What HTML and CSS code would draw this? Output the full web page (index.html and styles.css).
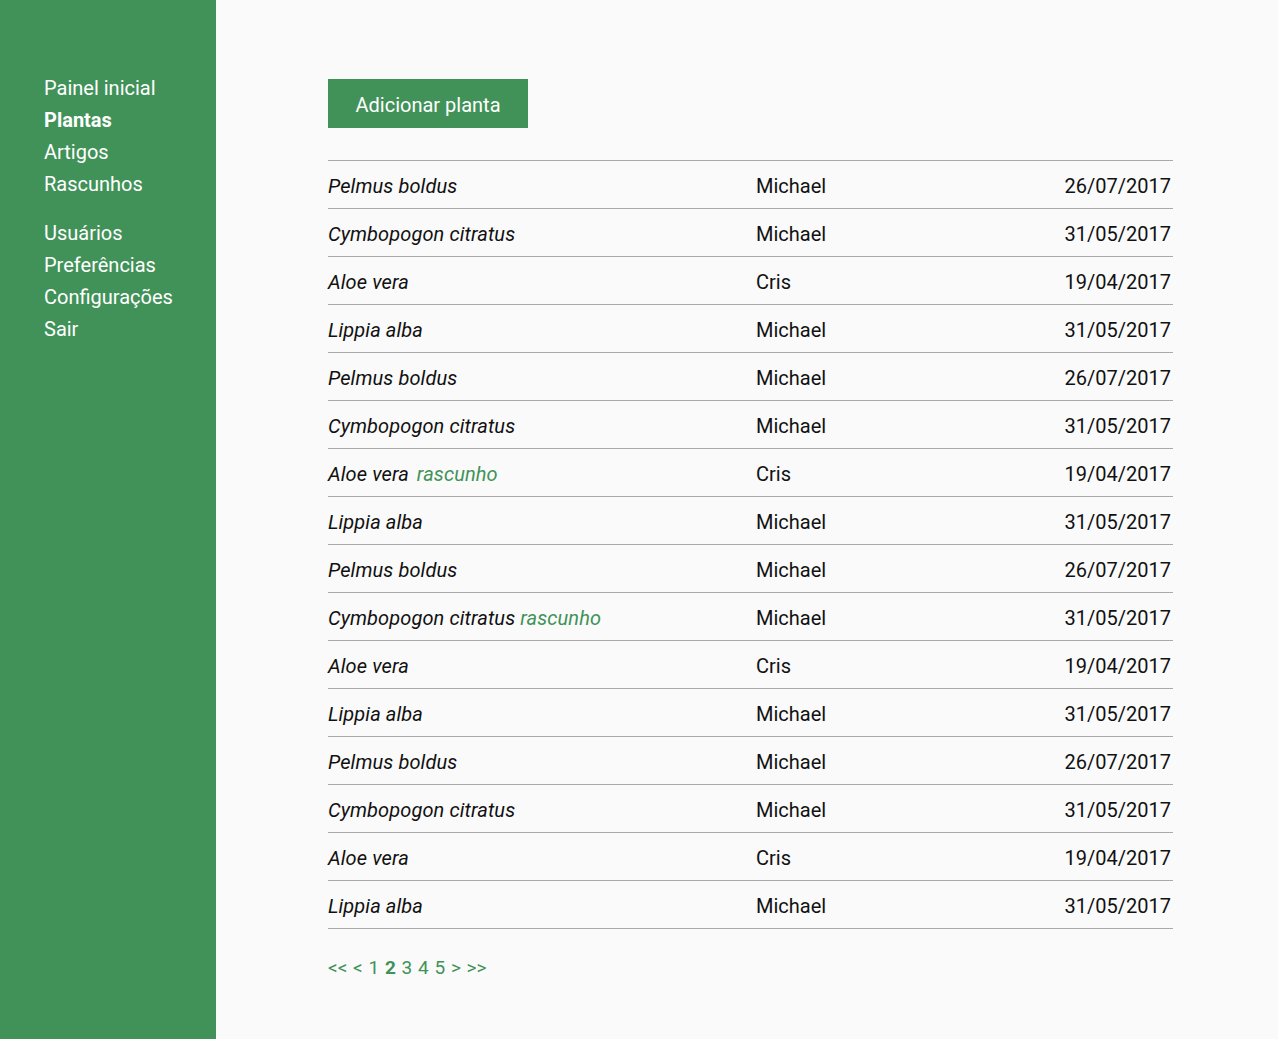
FILE: index.html
```html
<!DOCTYPE html>
<html lang="pt">
<head>
<meta charset="utf-8">
<title>Plantas</title>
<link rel="stylesheet" href="styles.css">
</head>
<body>
<div class="layout">
  <nav class="sidebar">
    <ul class="menu">
      <li>Painel inicial</li>
      <li class="active">Plantas</li>
      <li>Artigos</li>
      <li>Rascunhos</li>
    </ul>
    <ul class="menu">
      <li>Usuários</li>
      <li>Preferências</li>
      <li>Configurações</li>
      <li>Sair</li>
    </ul>
  </nav>
  <main class="content">
    <button class="add-btn">Adicionar planta</button>
    <div class="plants">
      <div class="row"><span class="name">Pelmus boldus</span><span class="author">Michael</span><span class="date">26/07/2017</span></div>
      <div class="row"><span class="name">Cymbopogon citratus</span><span class="author">Michael</span><span class="date">31/05/2017</span></div>
      <div class="row"><span class="name">Aloe vera</span><span class="author">Cris</span><span class="date">19/04/2017</span></div>
      <div class="row"><span class="name">Lippia alba</span><span class="author">Michael</span><span class="date">31/05/2017</span></div>
      <div class="row"><span class="name">Pelmus boldus</span><span class="author">Michael</span><span class="date">26/07/2017</span></div>
      <div class="row"><span class="name">Cymbopogon citratus</span><span class="author">Michael</span><span class="date">31/05/2017</span></div>
      <div class="row"><span class="name">Aloe vera <span class="draft wide">rascunho</span></span><span class="author">Cris</span><span class="date">19/04/2017</span></div>
      <div class="row"><span class="name">Lippia alba</span><span class="author">Michael</span><span class="date">31/05/2017</span></div>
      <div class="row"><span class="name">Pelmus boldus</span><span class="author">Michael</span><span class="date">26/07/2017</span></div>
      <div class="row"><span class="name">Cymbopogon citratus <span class="draft">rascunho</span></span><span class="author">Michael</span><span class="date">31/05/2017</span></div>
      <div class="row"><span class="name">Aloe vera</span><span class="author">Cris</span><span class="date">19/04/2017</span></div>
      <div class="row"><span class="name">Lippia alba</span><span class="author">Michael</span><span class="date">31/05/2017</span></div>
      <div class="row"><span class="name">Pelmus boldus</span><span class="author">Michael</span><span class="date">26/07/2017</span></div>
      <div class="row"><span class="name">Cymbopogon citratus</span><span class="author">Michael</span><span class="date">31/05/2017</span></div>
      <div class="row"><span class="name">Aloe vera</span><span class="author">Cris</span><span class="date">19/04/2017</span></div>
      <div class="row"><span class="name">Lippia alba</span><span class="author">Michael</span><span class="date">31/05/2017</span></div>
    </div>
    <div class="pager">
      <span>&lt;&lt;</span><span>&lt;</span><span>1</span><span class="current">2</span><span>3</span><span>4</span><span>5</span><span>&gt;</span><span>&gt;&gt;</span>
    </div>
  </main>
</div>
</body>
</html>
```
FILE: styles.css
```css
html, body {
  margin: 0;
  padding: 0;
  height: 100%;
}
body {
  font-family: Roboto, "Liberation Sans", sans-serif;
  background: #fafafa;
  color: #111;
}
.layout {
  display: flex;
  min-height: 100%;
}
.sidebar {
  width: 216px;
  flex: none;
  background: #419258;
  padding: 72px 0 0 44px;
  box-sizing: border-box;
}
.menu {
  list-style: none;
  margin: 0 0 16px 0;
  padding: 0;
}
.menu li {
  color: #fff;
  font-size: 20px;
  line-height: 32.15px;
  height: 32.15px;
}
.menu li.active {
  font-weight: 700;
}
.content {
  flex: 1;
  padding: 79px 105px 0 112px;
}
.add-btn {
  display: block;
  width: 200px;
  height: 49px;
  background: #419258;
  color: #fff;
  border: none;
  font-family: Roboto, "Liberation Sans", sans-serif;
  font-size: 20px;
  padding: 2px 0 0 0;
  margin: 0 0 32px 0;
}
.plants {
  width: 845px;
  border-top: 1px solid #aaa;
}
.row {
  display: flex;
  align-items: center;
  height: 48px;
  box-sizing: border-box;
  padding-top: 2px;
  border-bottom: 1px solid #aaa;
  font-size: 20px;
}
.name {
  width: 428px;
  flex: none;
  font-style: italic;
  letter-spacing: 0.1px;
}
.author {
  flex: 1;
}
.date {
  padding-right: 2px;
}
.draft {
  color: #419258;
}
.draft.wide {
  margin-left: 3px;
}
.pager {
  display: flex;
  gap: 5.75px;
  margin-top: 27px;
  color: #419258;
  font-size: 19px;
}
.pager .current {
  font-weight: 700;
}
```
